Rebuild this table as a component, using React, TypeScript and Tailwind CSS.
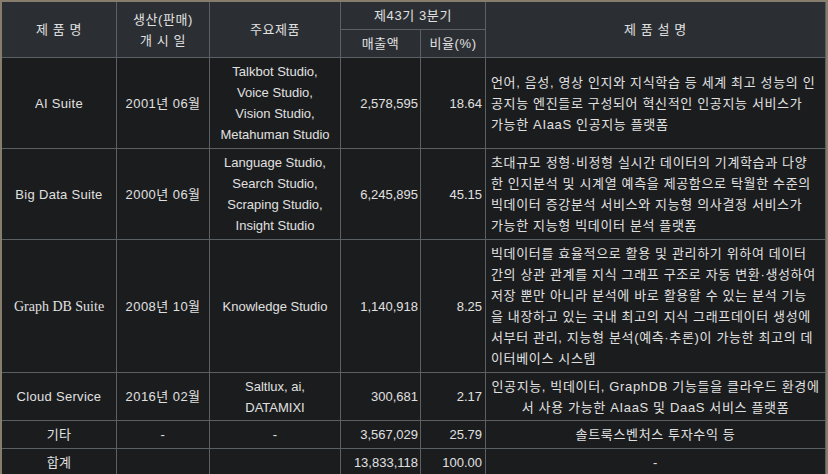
import React from 'react';

interface ProductRow {
  name: string;
  serif?: boolean;
  date: string;
  products: string[];
  sales: string;
  ratio: string;
  desc: string[];
  centerDesc?: boolean;
}

const rows: ProductRow[] = [
  {
    name: 'AI Suite',
    date: '2001년 06월',
    products: ['Talkbot Studio,', 'Voice Studio,', 'Vision Studio,', 'Metahuman Studio'],
    sales: '2,578,595',
    ratio: '18.64',
    desc: [
      '언어, 음성, 영상 인지와 지식학습 등 세계 최고 성능의 인',
      '공지능 엔진들로 구성되어 혁신적인 인공지능 서비스가',
      '가능한 AIaaS 인공지능 플랫폼',
    ],
  },
  {
    name: 'Big Data Suite',
    date: '2000년 06월',
    products: ['Language Studio,', 'Search Studio,', 'Scraping Studio,', 'Insight Studio'],
    sales: '6,245,895',
    ratio: '45.15',
    desc: [
      '초대규모 정형·비정형 실시간 데이터의 기계학습과 다양',
      '한 인지분석 및 시계열 예측을 제공함으로 탁월한 수준의',
      '빅데이터 증강분석 서비스와 지능형 의사결정 서비스가',
      '가능한 지능형 빅데이터 분석 플랫폼',
    ],
  },
  {
    name: 'Graph DB Suite',
    serif: true,
    date: '2008년 10월',
    products: ['Knowledge Studio'],
    sales: '1,140,918',
    ratio: '8.25',
    desc: [
      '빅데이터를 효율적으로 활용 및 관리하기 위하여 데이터',
      '간의 상관 관계를 지식 그래프 구조로 자동 변환·생성하여',
      '저장 뿐만 아니라 분석에 바로 활용할 수 있는 분석 기능',
      '을 내장하고 있는 국내 최고의 지식 그래프데이터 생성에',
      '서부터 관리, 지능형 분석(예측·추론)이 가능한 최고의 데',
      '이터베이스 시스템',
    ],
  },
  {
    name: 'Cloud Service',
    date: '2016년 02월',
    products: ['Saltlux, ai,', 'DATAMIXI'],
    sales: '300,681',
    ratio: '2.17',
    desc: [
      '인공지능, 빅데이터, GraphDB 기능들을 클라우드 환경에',
      '서 사용 가능한 AIaaS 및 DaaS 서비스 플랫폼',
    ],
    centerDesc: true,
  },
  {
    name: '기타',
    date: '-',
    products: ['-'],
    sales: '3,567,029',
    ratio: '25.79',
    desc: ['솔트룩스벤처스 투자수익 등'],
    centerDesc: true,
  },
  {
    name: '합계',
    date: '',
    products: [''],
    sales: '13,833,118',
    ratio: '100.00',
    desc: ['-'],
    centerDesc: true,
  },
];

const head = 'bg-[#2b2f33] flex flex-col items-center justify-center text-center tracking-[0.6px]';
const cell = 'bg-[#1b1c1e] flex flex-col items-center justify-center text-center';

export default function App() {
  return (
    <div
      className="w-[828px] h-[474px] overflow-hidden bg-[#1b1c1e] border-x-2 border-t-2 border-[#867d6d] text-[13px] leading-[21px] text-[#e0e0e0]"
      style={{ fontFamily: '"Liberation Sans", "Noto Sans CJK KR", sans-serif' }}
    >
      <div className="grid grid-cols-[114px_92px_130px_79px_64px_339px] grid-rows-[27px_27px_90px_90px_132px_47px_27px_27px] gap-px pr-px pb-px bg-[#5b6065]">
        {/* Header */}
        <div className={`${head} row-span-2`}>제 품 명</div>
        <div className={`${head} row-span-2`}>
          <span>생산(판매)</span>
          <span>개 시 일</span>
        </div>
        <div className={`${head} row-span-2`}>주요제품</div>
        <div className={`${head} col-span-2`}>제43기 3분기</div>
        <div className={`${head} row-span-2`}>제 품 설 명</div>
        <div className={head}>매출액</div>
        <div className={head}>비율(%)</div>

        {/* Body */}
        {rows.map((r) => (
          <React.Fragment key={r.name}>
            <div className={cell}>
              <span
                className={r.serif ? 'text-[14px]' : 'tracking-[0.3px]'}
                style={r.serif ? { fontFamily: '"Liberation Serif", "Noto Sans CJK KR", serif' } : undefined}
              >
                {r.name}
              </span>
            </div>
            <div className={`${cell} tracking-[0.45px]`}>{r.date}</div>
            <div className={cell}>
              {r.products.map((p, i) => (
                <span key={i} className="whitespace-nowrap">
                  {p}
                </span>
              ))}
            </div>
            <div className="bg-[#1b1c1e] flex items-center justify-end pr-[2px]">{r.sales}</div>
            <div className="bg-[#1b1c1e] flex items-center justify-end pr-[3px]">{r.ratio}</div>
            <div
              className={`bg-[#1b1c1e] flex flex-col justify-center overflow-hidden tracking-[0.65px] ${
                r.centerDesc ? 'items-center text-center' : 'items-start pl-[5px]'
              }`}
            >
              {r.desc.map((line, i) => (
                <span key={i} className="whitespace-nowrap">
                  {line}
                </span>
              ))}
            </div>
          </React.Fragment>
        ))}
      </div>
    </div>
  );
}
